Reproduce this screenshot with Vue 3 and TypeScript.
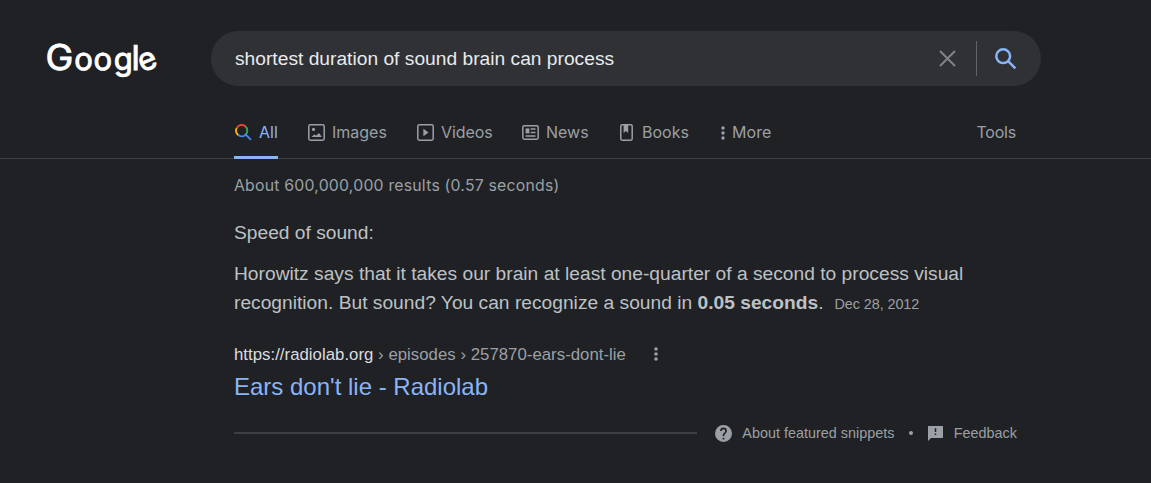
<script setup lang="ts">
interface Tab { name: string; icon: string }
const tabs: Tab[] = [
  { name: 'All', icon: 'all' },
  { name: 'Images', icon: 'images' },
  { name: 'Videos', icon: 'videos' },
  { name: 'News', icon: 'news' },
  { name: 'Books', icon: 'books' },
  { name: 'More', icon: 'more' },
]
</script>

<template>
  <div class="page">
    <header class="header">
      <svg class="logo" width="120" height="44" viewBox="0 0 120 44" aria-label="Google">
        <text class="big" x="3.4" y="32.8" transform="scale(1.05 1)">G</text>
        <text x="32.3 51.4 71.8" y="32.8">oog</text>
        <text class="tall" x="89.4" y="32.8">l</text>
        <text x="96.4" y="32.8" transform="rotate(-22 105.5 24.5)">e</text>
      </svg>
      <div class="search">
        <span class="query">shortest duration of sound brain can process</span>
        <svg class="clear" width="17" height="17" viewBox="0 0 17 17"><path d="M1 1 16 16M16 1 1 16" /></svg>
        <span class="divider"></span>
        <svg class="magnifier" width="22" height="22" viewBox="0 0 22 22"><circle cx="8.2" cy="8.2" r="6.9" /><path d="m13.1 13.1 7.3 7.3" /></svg>
      </div>
    </header>
    <nav class="tabs">
      <a v-for="tab in tabs" :key="tab.name" class="tab" :class="'tab-' + tab.icon">
        <svg v-if="tab.icon === 'all'" class="icon" width="17" height="17" viewBox="0 0 17 17" fill="none" stroke-width="1.9">
          <path d="M1.7 4.1A5.6 5.6 0 0 1 10.7 2.6" stroke="#ea4335" />
          <path d="M1.7 4.1A5.6 5.6 0 0 0 3.4 11.2" stroke="#fbbc04" />
          <path d="M10.5 2.5A5.6 5.6 0 0 1 10.7 10.6" stroke="#34a853" />
          <path d="M3.2 11.1A5.6 5.6 0 0 0 10.7 10.6L16 15.9" stroke="#4285f4" />
        </svg>
        <svg v-else-if="tab.icon === 'images'" class="icon" width="17" height="17" viewBox="0 0 17 17" fill="none" stroke="currentColor" stroke-width="1.5">
          <rect x=".8" y=".8" width="15.4" height="15.4" rx="1.6" /><circle cx="5.5" cy="5.4" r="1.6" fill="currentColor" stroke="none" />
          <path d="M3.6 13 6.4 10.3 8 11.7 11 8.9 13.8 13Z" fill="currentColor" stroke="none" />
        </svg>
        <svg v-else-if="tab.icon === 'videos'" class="icon" width="17" height="17" viewBox="0 0 17 17" fill="none" stroke="currentColor" stroke-width="1.5">
          <rect x=".8" y=".8" width="15.4" height="15.4" rx="1.6" /><path d="M6.4 4.7v7.6l5.1-3.8z" fill="currentColor" stroke="none" />
        </svg>
        <svg v-else-if="tab.icon === 'news'" class="icon" width="17" height="17" viewBox="0 0 17 17" fill="none" stroke="currentColor" stroke-width="1.5">
          <rect x=".8" y="1.8" width="15.4" height="13.4" rx="1.6" /><path d="M3.6 4.4h3.8v5H3.6z" fill="currentColor" stroke="none" /><path d="M8.7 5h4.8M8.7 8.5h4.8M3.6 12h9.9" />
        </svg>
        <svg v-else-if="tab.icon === 'books'" class="icon" width="13" height="17" viewBox="0 0 13 17" fill="none" stroke="currentColor" stroke-width="1.5">
          <rect x=".8" y=".8" width="11.4" height="15.4" rx="1.4" /><path d="M3.6 1h4.6v7.9L5.9 7 3.6 8.9z" fill="currentColor" stroke="none" />
        </svg>
        <svg v-else class="icon" width="4" height="14" viewBox="0 0 4 14" fill="currentColor">
          <circle cx="2" cy="2" r="1.7" /><circle cx="2" cy="7" r="1.7" /><circle cx="2" cy="12" r="1.7" />
        </svg>
        <span class="label">{{ tab.name }}</span>
      </a>
      <a class="tools">Tools</a>
    </nav>
    <main class="content">
      <div class="stats">About 600,000,000 results (0.57 seconds)</div>
      <h2 class="heading">Speed of sound:</h2>
      <p class="snippet">
        Horowitz says that it takes our brain at least one-quarter of a second to process visual<br />
        recognition. But sound? You can recognize a sound in <b>0.05 seconds</b>.<span class="date">Dec 28, 2012</span>
      </p>
      <div class="source">
        <span class="url"><span class="domain">https://radiolab.org</span> › episodes › 257870-ears-dont-lie</span>
        <svg class="menu" width="4" height="14" viewBox="0 0 4 14" fill="currentColor"><circle cx="2" cy="2" r="1.8" /><circle cx="2" cy="7" r="1.8" /><circle cx="2" cy="12" r="1.8" /></svg>
      </div>
      <h3 class="title"><span>Ears don't lie - Radiolab</span></h3>
      <footer class="footer">
        <span class="rule"></span>
        <svg class="help" width="17" height="17" viewBox="2 2 20 20" fill="currentColor"><path d="M12 2a10 10 0 1 0 0 20 10 10 0 0 0 0-20zm1 17h-2v-2h2zm2.07-7.75-.9.92C13.45 12.9 13 13.5 13 15h-2v-.5c0-1.1.45-2.1 1.17-2.83l1.24-1.26c.37-.36.59-.86.59-1.41a2 2 0 0 0-4 0H8a4 4 0 0 1 8 0c0 .88-.36 1.68-.93 2.25z" /></svg>
        <span class="about">About featured snippets</span>
        <span class="dot"></span>
        <svg class="flag" width="15" height="15" viewBox="2 2 20 20" fill="currentColor"><path d="M22 2H2v20l4-4h16zM13 14h-2v-2h2zm0-4h-2V5h2z" fill-rule="evenodd" /></svg>
        <span class="feedback">Feedback</span>
      </footer>
    </main>
  </div>
</template>

<style>
body { margin: 0; background: #202124; overflow: hidden; }
</style>

<style scoped>
.page { box-sizing: border-box; width: 1151px; height: 483px; background: #202124; color: #bdc1c6; font-family: "Liberation Sans", Arial, sans-serif; overflow: hidden; }
.header { display: flex; height: 106px; padding: 31px 0 0 42px; box-sizing: border-box; }
.logo { margin: 6px 49px 0 0; fill: #fff; stroke: #fff; stroke-width: .9; font-family: Inter, sans-serif; font-weight: 400; font-size: 31px; overflow: visible; text-rendering: geometricPrecision; }
.logo .big { font-size: 35.5px; }
.logo .tall { font-size: 34px; }
.search { display: flex; align-items: center; width: 830px; height: 55px; border-radius: 28px; background: #303134; box-sizing: border-box; padding: 0 24px; }
.query { flex: 1; font-size: 19.2px; letter-spacing: .01px; color: #e8eaed; white-space: nowrap; }
.clear { stroke: #7f8388; stroke-width: 2; fill: none; margin-right: 20px; }
.divider { width: 1px; height: 35px; background: #5f6368; margin-right: 18px; }
.magnifier { stroke: #8ab4f8; stroke-width: 2.5; fill: none; }
.tabs { display: flex; height: 53px; box-sizing: border-box; border-bottom: 1px solid #3c4043; padding-left: 234px; color: #9aa0a6; font-family: Inter, sans-serif; font-size: 16px; }
.tab { display: flex; align-items: center; height: 53px; box-sizing: border-box; white-space: nowrap; }
.label { padding-bottom: 2px; }
.icon { flex: none; margin-right: 7px; }
.tab-all { width: 44px; margin-right: 30px; border-bottom: 3px solid #8ab4f8; padding-top: 3px; padding-left: 1px; color: #8ab4f8; }
.tab-images { width: 109px; }
.tab-videos { width: 105px; letter-spacing: -.1px; }
.tab-news { width: 97px; }
.tab-books { width: 101px; padding-left: 1px; box-sizing: border-box; }
.tab-books .icon { margin-right: 9px; }
.tab-more { padding-left: 1px; letter-spacing: .1px; }
.tools { margin-left: auto; margin-right: 135px; line-height: 53px; letter-spacing: -.2px; }
.content { width: 783px; padding-left: 234px; }
.stats { height: 20px; margin-top: 17px; line-height: 20px; font-family: Inter, sans-serif; font-size: 15.8px; letter-spacing: .22px; color: #9aa0a6; white-space: nowrap; }
.heading { margin: 22px 0 12px; font-weight: 400; font-size: 19.2px; line-height: 29px; }
.snippet { margin: 0; font-size: 19.2px; line-height: 29px; letter-spacing: .01px; white-space: nowrap; }
.date { margin-left: 11px; font-size: 14.4px; letter-spacing: -.08px; color: #9aa0a6; }
.source { display: flex; align-items: center; height: 22px; margin-top: 25px; font-size: 16.8px; letter-spacing: .02px; color: #9aa0a6; }
.url { width: 420px; white-space: nowrap; }
.menu { margin-bottom: 2px; }
.domain { color: #dadce0; }
.title { margin: 5px 0 0; font-weight: 400; font-size: 24px; line-height: 31px; color: #8ab4f8; }
.footer { display: flex; align-items: center; height: 20px; margin-top: 21px; font-size: 14.4px; color: #9aa0a6; white-space: nowrap; }
.rule { width: 463px; height: 2px; background: #3c4043; margin-right: 18px; }
.help { margin-right: 10px; }
.about { width: 167px; padding-left: .5px; box-sizing: border-box; }
.dot { width: 4px; height: 4px; border-radius: 50%; background: #9aa0a6; margin-right: 15px; }
.flag { margin-right: 11px; }
</style>
